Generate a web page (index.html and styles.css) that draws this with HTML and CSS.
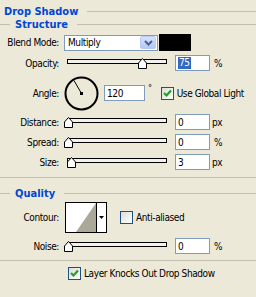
FILE: index.html
```html
<!DOCTYPE html>
<html lang="en">
<head>
    <meta charset="UTF-8">
    <title>Drop Shadow</title>
    <link rel="stylesheet" href="styles.css">
</head>
<body>
    <div class="panel">
        <div class="title-row">
            <span class="title">Drop Shadow</span>
            <span class="rule"></span>
        </div>
        <div class="group-row structure">
            <span class="rule lead"></span>
            <span class="group-title">Structure</span>
            <span class="rule"></span>
        </div>

        <div class="row blend">
            <span class="lbl">Blend Mode:</span>
            <div class="select">
                <span class="select-text">Multiply</span>
                <span class="select-btn">
                    <svg width="9" height="6" viewBox="0 0 9 6"><path d="M1 1 L4.5 4.5 L8 1" fill="none" stroke="#4d6185" stroke-width="2"/></svg>
                </span>
            </div>
            <span class="swatch"></span>
        </div>

        <div class="row opacity">
            <span class="lbl">Opacity:</span>
            <div class="slider">
                <span class="track"></span>
                <span class="thumb" style="left: 74px"><svg width="9" height="11" viewBox="0 0 9 11"><path d="M4.5 0.5 L8.5 5 L8.5 10.5 L0.5 10.5 L0.5 5 Z" fill="#fff" stroke="#000"/></svg></span>
            </div>
            <span class="field"><span class="picked">75</span></span>
            <span class="unit pct">%</span>
        </div>

        <div class="row angle">
            <span class="lbl">Angle:</span>
            <svg class="dial" width="35" height="35" viewBox="0 0 35 35">
                <circle cx="17.5" cy="17.5" r="16" fill="none" stroke="#000" stroke-width="2"/>
                <line x1="17.5" y1="17.5" x2="10" y2="4.5" stroke="#000" stroke-width="1"/>
                <rect x="16" y="16" width="3" height="3" fill="#000"/>
            </svg>
            <span class="field wide">120</span>
            <span class="degree">°</span>
            <span class="check on global">
                <svg width="11" height="11" viewBox="0 0 11 11"><path d="M2 5 L4.5 7.5 L9 2.5" fill="none" stroke="#21a121" stroke-width="2.2"/></svg>
            </span>
            <span class="check-label">Use Global Light</span>
        </div>

        <div class="row distance">
            <span class="lbl">Distance:</span>
            <div class="slider">
                <span class="track"></span>
                <span class="thumb" style="left: 0px"><svg width="9" height="11" viewBox="0 0 9 11"><path d="M4.5 0.5 L8.5 5 L8.5 10.5 L0.5 10.5 L0.5 5 Z" fill="#fff" stroke="#000"/></svg></span>
            </div>
            <span class="field">0</span>
            <span class="unit px">px</span>
        </div>

        <div class="row spread">
            <span class="lbl">Spread:</span>
            <div class="slider">
                <span class="track"></span>
                <span class="thumb" style="left: 0px"><svg width="9" height="11" viewBox="0 0 9 11"><path d="M4.5 0.5 L8.5 5 L8.5 10.5 L0.5 10.5 L0.5 5 Z" fill="#fff" stroke="#000"/></svg></span>
            </div>
            <span class="field">0</span>
            <span class="unit pct">%</span>
        </div>

        <div class="row size">
            <span class="lbl">Size:</span>
            <div class="slider">
                <span class="track"></span>
                <span class="thumb" style="left: 3px"><svg width="9" height="11" viewBox="0 0 9 11"><path d="M4.5 0.5 L8.5 5 L8.5 10.5 L0.5 10.5 L0.5 5 Z" fill="#fff" stroke="#000"/></svg></span>
            </div>
            <span class="field">3</span>
            <span class="unit px">px</span>
        </div>

        <div class="sep first"></div>

        <div class="group-row quality">
            <span class="rule lead"></span>
            <span class="group-title">Quality</span>
            <span class="rule"></span>
        </div>

        <div class="row contour">
            <span class="lbl">Contour:</span>
            <svg class="curve" width="42" height="31" viewBox="0 0 42 31">
                <rect x="0.5" y="0.5" width="41" height="30" fill="#fff" stroke="#000"/>
                <path d="M11 30 L31 1 L31 30 Z" fill="#aca899"/>
                <line x1="31.5" y1="1" x2="31.5" y2="30" stroke="#000"/>
                <path d="M34 14 L39 14 L36.5 17 Z" fill="#000"/>
            </svg>
            <span class="check anti"></span>
            <span class="check-label">Anti-aliased</span>
        </div>

        <div class="row noise">
            <span class="lbl">Noise:</span>
            <div class="slider">
                <span class="track"></span>
                <span class="thumb" style="left: 0px"><svg width="9" height="11" viewBox="0 0 9 11"><path d="M4.5 0.5 L8.5 5 L8.5 10.5 L0.5 10.5 L0.5 5 Z" fill="#fff" stroke="#000"/></svg></span>
            </div>
            <span class="field">0</span>
            <span class="unit pct">%</span>
        </div>

        <div class="sep last"></div>

        <div class="row knockout">
            <span class="check on">
                <svg width="11" height="11" viewBox="0 0 11 11"><path d="M2 5 L4.5 7.5 L9 2.5" fill="none" stroke="#21a121" stroke-width="2.2"/></svg>
            </span>
            <span class="check-label">Layer Knocks Out Drop Shadow</span>
        </div>
    </div>
</body>
</html>
```

FILE: styles.css
```css
body {
    margin: 0;
    background-color: #ece9d8;
    font-family: "DejaVu Sans Condensed", "DejaVu Sans", sans-serif;
    font-stretch: condensed;
    font-size: 10px;
    letter-spacing: -0.4px;
    color: #000;
}

.panel {
    width: 256px;
    height: 297px;
    display: flex;
    flex-direction: column;
}

/* headings */
.title-row,
.group-row {
    display: flex;
    align-items: center;
}

.title-row {
    margin-top: 4px;
    height: 14px;
    padding-left: 4px;
}

.title,
.group-title {
    font-size: 11px;
    font-weight: bold;
    letter-spacing: 0;
    color: #0046d5;
    white-space: nowrap;
}

.rule {
    flex: 1;
    height: 1px;
    background-color: #c2bfae;
    margin-left: 9px;
}

.rule.lead {
    flex: none;
    width: 10px;
    margin: 0 5px 0 0;
}

.structure {
    height: 12px;
}

.quality {
    margin-top: 9px;
    height: 12px;
}

.sep {
    height: 1px;
    background-color: #c2bfae;
}

.sep.first {
    margin-top: 7px;
}

.sep.last {
    margin-top: 6px;
}

/* rows */
.row {
    display: flex;
    align-items: center;
    height: 16px;
    margin-top: 4px;
}

.lbl {
    flex: none;
    width: 59px;
    margin-right: 5px;
    text-align: right;
    white-space: nowrap;
}

.blend {
    height: 17px;
}

.angle {
    margin-top: 5px;
    height: 34px;
}

.contour {
    margin-top: 3px;
    height: 30px;
}

.noise {
    margin-top: 6px;
}

.knockout {
    margin-top: 6px;
    height: 13px;
    padding-left: 68px;
}

/* combo */
.select {
    display: flex;
    align-items: center;
    width: 94px;
    height: 16px;
    box-sizing: border-box;
    border: 1px solid #7f9db9;
    background-color: #fff;
}

.select-text {
    flex: 1;
    padding-left: 3px;
}

.select-btn {
    display: flex;
    align-items: center;
    justify-content: center;
    width: 16px;
    height: 13px;
    margin-right: 1px;
    box-sizing: border-box;
    border: 1px solid #b9cbf3;
    border-radius: 2px;
    background: linear-gradient(#d6e3fd, #b3c9f6);
}

.swatch {
    width: 32px;
    height: 17px;
    margin-left: 1px;
    background-color: #000;
}

/* sliders */
.slider {
    position: relative;
    flex: none;
    width: 103px;
    height: 16px;
}

.track {
    position: absolute;
    left: 3px;
    top: 4px;
    width: 100px;
    height: 5px;
    box-sizing: border-box;
    border: 1px solid #000;
    background-color: #f3f2ea;
}

.thumb {
    position: absolute;
    top: 3px;
    width: 9px;
    height: 11px;
}

.thumb svg {
    display: block;
}

/* fields */
.field {
    display: flex;
    align-items: center;
    width: 35px;
    height: 16px;
    margin-left: 8px;
    padding-left: 2px;
    box-sizing: border-box;
    border: 1px solid #7f9db9;
    background-color: #fff;
}

.field.wide {
    width: 41px;
    margin-left: 5px;
}

.picked {
    background-color: #316ac5;
    color: #fff;
    padding: 0 1px;
    line-height: 12px;
}

.unit.pct {
    margin-left: 4px;
}

.unit.px {
    margin-left: 2px;
}

.dial {
    flex: none;
    display: block;
}

.degree {
    align-self: flex-start;
    margin: 7px 0 0 3px;
    font-size: 9px;
}

.curve {
    flex: none;
    display: block;
    margin-left: 1px;
}

/* checkboxes */
.check {
    flex: none;
    display: flex;
    align-items: center;
    justify-content: center;
    width: 13px;
    height: 13px;
    box-sizing: border-box;
    border: 1px solid #1c5180;
    background: linear-gradient(135deg, #dcdcd7, #fff);
}

.check.global {
    margin-left: 9px;
}

.check.anti {
    margin-left: 13px;
}

.check-label {
    margin-left: 3px;
    white-space: nowrap;
}
```
